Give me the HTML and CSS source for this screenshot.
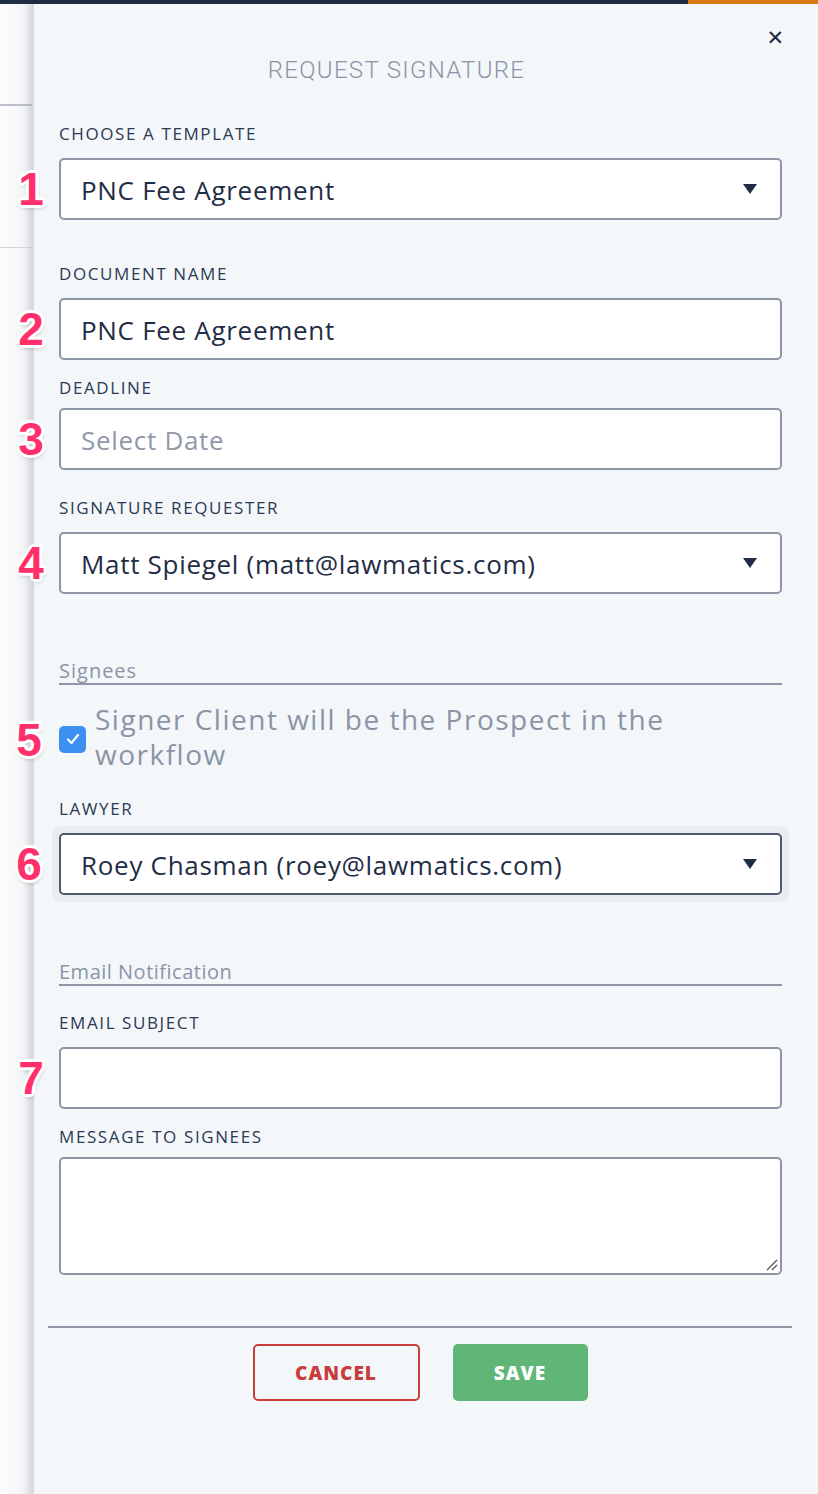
FILE: index.html
```html
<!DOCTYPE html>
<html>
<head>
<meta charset="utf-8">
<link rel="stylesheet" href="styles.css">
</head>
<body>
<div class="topbar"><div class="topbar-dark"></div><div class="topbar-orange"></div></div>
<div class="page">
  <div class="bg-strip">
    <div class="bg-line bg-line-1"></div>
    <div class="bg-line bg-line-2"></div>
  </div>
  <div class="panel">
    <div class="close">&#x2715;</div>
    <h1 class="title">REQUEST SIGNATURE</h1>

    <div class="field f1">
      <label class="label">CHOOSE A TEMPLATE</label>
      <div class="input select"><span class="num">1</span><span class="value">PNC Fee Agreement</span><span class="caret"></span></div>
    </div>

    <div class="field f2">
      <label class="label">DOCUMENT NAME</label>
      <div class="input"><span class="num">2</span><span class="value">PNC Fee Agreement</span></div>
    </div>

    <div class="field f3">
      <label class="label">DEADLINE</label>
      <div class="input"><span class="num">3</span><span class="value placeholder">Select Date</span></div>
    </div>

    <div class="field f4">
      <label class="label">SIGNATURE REQUESTER</label>
      <div class="input select"><span class="num">4</span><span class="value">Matt Spiegel (matt@lawmatics.com)</span><span class="caret"></span></div>
    </div>

    <div class="section section-signees">Signees</div>

    <div class="check-row">
      <span class="num num-check">5</span>
      <span class="checkbox"><svg width="20" height="20" viewBox="0 0 20 20"><path d="M5 10.5 L8.5 14 L15 6" fill="none" stroke="#fff" stroke-width="2.2" stroke-linecap="round" stroke-linejoin="round"/></svg></span>
      <span class="check-text">Signer Client will be the Prospect in the<br>workflow</span>
    </div>

    <div class="field f6">
      <label class="label">LAWYER</label>
      <div class="focus-ring">
        <div class="input select focused"><span class="num">6</span><span class="value">Roey Chasman (roey@lawmatics.com)</span><span class="caret"></span></div>
      </div>
    </div>

    <div class="section section-email">Email Notification</div>

    <div class="field f7">
      <label class="label">EMAIL SUBJECT</label>
      <div class="input"><span class="num">7</span></div>
    </div>

    <div class="field f8">
      <label class="label">MESSAGE TO SIGNEES</label>
      <div class="input textarea"><svg class="grip" width="14" height="14" viewBox="0 0 14 14"><path d="M3 13 L13 3 M8 13 L13 8" stroke="#555" stroke-width="1.3"/></svg></div>
    </div>

    <div class="footer">
      <button class="btn btn-cancel">CANCEL</button>
      <button class="btn btn-save">SAVE</button>
    </div>
  </div>
</div>
</body>
</html>
```

FILE: styles.css
```css
* { box-sizing: border-box; }
html, body { margin: 0; padding: 0; }
body {
  width: 818px;
  height: 1494px;
  overflow: hidden;
  background: #f4f7fa;
  font-family: "Open Sans", "Lato", sans-serif;
  color: #1f2d45;
}
.topbar { display: flex; height: 4px; }
.topbar-dark { width: 688px; background: #1f2d45; }
.topbar-orange { flex: 1; background: #e07a12; }

.page { display: flex; height: 1490px; }
.bg-strip {
  width: 32px;
  position: relative;
  background: linear-gradient(to right, #fdfdfe 0%, #f4f5f7 70%, #e2e4e8 100%);
}
.bg-line { position: absolute; left: 0; width: 32px; height: 2px; background: #b9bec7; }
.bg-line-1 { top: 100px; }
.bg-line-2 { top: 243px; height: 1px; background: #d2d6dc; }

.panel {
  flex: 1;
  position: relative;
  background: #f4f7fa;
  border-left: 2px solid #d6dae0;
  box-shadow: -3px 0 6px rgba(0,0,0,0.06);
  padding: 0 36px 0 25px;
}
.close {
  position: absolute;
  top: 22px;
  right: 34px;
  font-family: "DejaVu Sans", sans-serif;
  font-size: 21px;
  font-weight: bold;
  color: #1f2d45;
}
.title {
  margin: 50px 0 0 0;
  text-align: center;
  font-family: "Roboto", sans-serif;
  font-weight: 300;
  font-size: 24px;
  line-height: 32px;
  color: #8a94a6;
  letter-spacing: 1.3px;
  padding-right: 48px;
}
.field { display: flex; flex-direction: column; }
.label {
  font-size: 17px;
  line-height: 20px;
  letter-spacing: 1.6px;
  color: #2b3a52;
  margin-bottom: 14px;
}
.f1 { margin-top: 38px; }
.f2 { margin-top: 44px; }
.f3 { margin-top: 18px; }
.f3 .label { margin-bottom: 10px; }
.f4 { margin-top: 28px; }
.f6 { margin-top: 27px; }
.f6 .label { margin-bottom: 7px; }
.f7 { margin-top: 27px; }
.f8 { margin-top: 18px; }
.f8 .label { margin-bottom: 10px; }

.input {
  position: relative;
  height: 62px;
  background: #fff;
  border: 2px solid #8d96a5;
  border-radius: 5px;
  display: flex;
  align-items: center;
  padding: 0 20px;
}
.value { font-size: 26px; line-height: 34px; letter-spacing: 0.7px; color: #1f2d45; flex: 1; padding-top: 2px; }
.placeholder { color: #8f99a8; }
.caret {
  width: 0; height: 0;
  border-left: 7px solid transparent;
  border-right: 7px solid transparent;
  border-top: 10px solid #1f2d45;
  margin-right: 3px;
}
.focus-ring {
  margin: 0 -7px;
  padding: 7px 7px;
  background: #e9edf2;
  border-radius: 8px;
}
.input.focused { border-color: #4f5a6e; }
.textarea { height: 118px; }
.grip { position: absolute; right: 2px; bottom: 2px; }

.num {
  position: absolute;
  left: -47px;
  top: 50%;
  transform: translateY(-50%);
  width: 34px;
  text-align: center;
  font-family: "Liberation Sans", Arial, sans-serif;
  font-weight: bold;
  font-size: 46px;
  line-height: 46px;
  color: #ff2f6c;
  text-shadow:
    -2px -2px 0 #fff, 2px -2px 0 #fff, -2px 2px 0 #fff, 2px 2px 0 #fff,
    0 -3px 0 #fff, 0 3px 0 #fff, -3px 0 0 #fff, 3px 0 0 #fff,
    1px 3px 4px rgba(0,0,0,0.25);
}
.focused .num { left: -49px; }

.section {
  font-size: 20px;
  line-height: 24px;
  color: #8a94a6;
  border-bottom: 2px solid #8d96a5;
}
.section-signees { margin-top: 65px; letter-spacing: 1px; }
.section-email { margin-top: 58px; letter-spacing: 0.5px; }

.check-row {
  position: relative;
  display: flex;
  align-items: center;
  margin-top: 17px;
}
.num-check { left: -47px; margin-top: 3px; }
.checkbox {
  flex: none;
  width: 27px; height: 27px;
  border-radius: 5px;
  background: #3d8ff2;
  display: flex; align-items: center; justify-content: center;
  margin-right: 9px;
  margin-top: 4px;
}
.check-text {
  font-size: 28px;
  line-height: 35px;
  letter-spacing: 1.5px;
  color: #8a94a6;
}

.footer {
  margin: 51px -10px 0 -11px;
  border-top: 2px solid #8d96a5;
  padding-top: 16px;
  display: flex;
  justify-content: center;
  gap: 33px;
}
.btn {
  height: 57px;
  border-radius: 5px;
  font-family: "Open Sans", sans-serif;
  font-weight: 800;
  font-size: 19px;
  letter-spacing: 1px;
  cursor: pointer;
}
.btn-cancel {
  width: 167px;
  background: transparent;
  border: 2px solid #c83c3c;
  color: #c83c3c;
}
.btn-save {
  width: 135px;
  background: #5fb677;
  border: none;
  color: #fff;
}
```
